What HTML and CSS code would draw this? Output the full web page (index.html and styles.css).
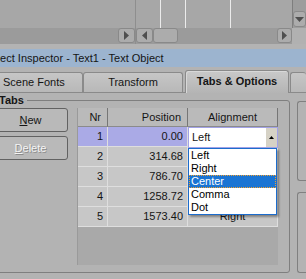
FILE: index.html
```html
<!DOCTYPE html>
<html lang="en">
<head>
    <meta charset="UTF-8" />
    <meta name="viewport" content="width=device-width, initial-scale=1.0" />
    <title>Object Inspector</title>
    <link rel="stylesheet" href="styles.css">
</head>
<body>
    <div class="viewport">
        <div class="lanes">
            <div class="lane lane-a"></div>
            <div class="lane lane-b"></div>
            <div class="lane lane-b"></div>
            <div class="lane lane-c"></div>
            <div class="lane lane-d"></div>
        </div>
        <div class="vscroll">
            <div class="sb-btn sb-down">
                <svg width="9" height="5" viewBox="0 0 9 5"><polygon points="0,0 9,0 4.5,5" fill="#4f4f4f"/></svg>
            </div>
        </div>
        <div class="hscroll">
            <div class="track track-left">
                <div class="sb-btn">
                    <svg width="5" height="9" viewBox="0 0 5 9"><polygon points="0,0 5,4.5 0,9" fill="#4f4f4f"/></svg>
                </div>
            </div>
            <div class="track track-right">
                <div class="sb-btn">
                    <svg width="5" height="9" viewBox="0 0 5 9"><polygon points="5,0 0,4.5 5,9" fill="#4f4f4f"/></svg>
                </div>
                <div class="thumb"></div>
                <div class="fill"></div>
                <div class="sb-btn sb-end">
                    <svg width="5" height="9" viewBox="0 0 5 9"><polygon points="0,0 5,4.5 0,9" fill="#4f4f4f"/></svg>
                </div>
            </div>
        </div>
        <div class="corner"></div>
    </div>

    <div class="window">
        <div class="title">Object Inspector - Text1 - Text Object</div>

        <div class="tabs">
            <div class="tab tab-fonts">Scene Fonts</div>
            <div class="tab tab-transform">Transform</div>
            <div class="tab tab-active">Tabs &amp; Options</div>
            <div class="tab tab-more"></div>
        </div>

        <div class="page">
            <fieldset class="group">
                <legend>Tabs</legend>
                <div class="group-body">
                    <div class="buttons">
                        <div class="btn"><u>N</u>ew</div>
                        <div class="btn btn-disabled"><u>D</u>elete</div>
                    </div>

                    <div class="grid">
                        <div class="hd">Nr</div>
                        <div class="hd">Position</div>
                        <div class="hd hd-center">Alignment</div>

                        <div class="cell row-sel">1</div>
                        <div class="cell row-sel">0.00</div>
                        <div class="cell cell-combo">
                            <div class="combo">
                                <span class="combo-text">Left</span>
                                <span class="combo-btn">
                                    <svg width="5" height="3" viewBox="0 0 5 3"><polygon points="0,3 5,3 2.5,0" fill="#000"/></svg>
                                </span>
                            </div>
                            <ul class="dropdown">
                                <li>Left</li>
                                <li>Right</li>
                                <li class="active">Center</li>
                                <li>Comma</li>
                                <li>Dot</li>
                            </ul>
                        </div>

                        <div class="cell">2</div>
                        <div class="cell">314.68</div>
                        <div class="cell cell-center"></div>

                        <div class="cell">3</div>
                        <div class="cell">786.70</div>
                        <div class="cell cell-center"></div>

                        <div class="cell">4</div>
                        <div class="cell">1258.72</div>
                        <div class="cell cell-center"></div>

                        <div class="cell">5</div>
                        <div class="cell">1573.40</div>
                        <div class="cell cell-center">Right</div>
                    </div>
                </div>
            </fieldset>

            <div class="side">
                <div class="side-box side-box-top"></div>
                <div class="side-box side-box-bottom"></div>
            </div>
        </div>
    </div>
</body>
</html>
```

FILE: styles.css
```css
* {
    box-sizing: border-box;
}

body {
    margin: 0;
    width: 306px;
    height: 279px;
    overflow: hidden;
    background-color: #b3b3b3;
    font-family: "Liberation Sans", Arial, sans-serif;
    font-size: 11px;
    color: #151515;
}

/* timeline view above the inspector */
.viewport {
    display: grid;
    grid-template-columns: 292px 14px;
    grid-template-rows: 28px 16px;
    padding-bottom: 5px;
}

.lanes {
    display: flex;
    background-color: #a7a7a7;
}

.lane {
    border-right: 1px solid #ebebeb;
}

.lane-a {
    width: 136px;
    border-right-color: #8e8e8e;
}

.lane-b {
    width: 25px;
}

.lane-c {
    width: 45px;
}

.lane-d {
    flex: 1;
    border-right: none;
}

.vscroll {
    background-color: #9d9d9d;
    border-left: 1px solid #7e7e7e;
    padding-top: 11px;
}

.hscroll {
    display: flex;
}

.track {
    display: flex;
    background-color: #9b9b9b;
}

.track-left {
    width: 136px;
    justify-content: flex-end;
    border-right: 1px solid #8e8e8e;
}

.track-right {
    flex: 1;
}

.sb-btn {
    width: 17px;
    height: 15px;
    display: flex;
    align-items: center;
    justify-content: center;
    background-color: #acacac;
    border: 1px solid #898989;
    border-radius: 3px;
}

.sb-down {
    width: 13px;
    height: 16px;
}

.sb-end {
    width: 15px;
}

.thumb {
    width: 25px;
    height: 15px;
    background-color: #acacac;
    border: 1px solid #898989;
    border-radius: 3px;
}

.fill {
    flex: 1;
}

.corner {
    background-color: #b1b1b1;
}

/* inspector window, its left part is scrolled out of view */
.window {
    margin-left: -30px;
    width: 336px;
}

.title {
    height: 18px;
    line-height: 18px;
    padding-left: 13px;
    background-color: #9cb4cf;
    white-space: nowrap;
}

.tabs {
    display: flex;
    align-items: flex-end;
    height: 26px;
    border-bottom: 1px solid #8a8a8a;
}

.tab {
    height: 20px;
    line-height: 19px;
    text-align: center;
    white-space: nowrap;
    border: 1px solid #8a8a8a;
    border-bottom: none;
    border-radius: 3px 3px 0 0;
    background: linear-gradient(#c6c6c6, #b8b8b8);
}

.tab-fonts {
    width: 113px;
    text-align: left;
    padding-left: 32px;
}

.tab-transform {
    width: 100px;
    margin-right: 2px;
}

.tab-active {
    width: 104px;
    height: 23px;
    line-height: 21px;
    margin-right: 1px;
    margin-bottom: -1px;
    font-weight: bold;
    background: linear-gradient(#c9c9c9, #b4b4b4);
    box-shadow: inset 1px 1px 0 #d8d8d8;
}

.tab-more {
    flex: 1;
    border-right: none;
}

.page {
    display: flex;
    padding-top: 1px;
}

.group {
    width: 310px;
    min-width: 0;
    margin: 0 0 0 10px;
    padding: 1px 11px 7px 12px;
    border: 1px solid #7f7f7f;
    border-radius: 3px;
}

.group legend {
    font-weight: bold;
    line-height: 13px;
    padding: 0 3px;
    margin-left: 3px;
}

.group-body {
    display: flex;
}

.buttons {
    width: 75px;
    display: flex;
    flex-direction: column;
    gap: 4px;
}

.btn {
    height: 24px;
    line-height: 22px;
    text-align: center;
    background-color: #b9b9b9;
    border: 1px solid #626262;
    border-radius: 3px;
}

.btn-disabled {
    color: #f4f4f4;
    text-shadow: 1px 1px 0 #8c8c8c;
}

/* tab stops table */
.grid {
    width: 201px;
    height: 157px;
    margin-left: 9px;
    display: grid;
    grid-template-columns: 30px 80px 90px;
    grid-template-rows: 19px repeat(5, 20px);
    align-content: start;
    background-color: #a9a9a9;
    border-left: 1px solid #9a9a9a;
}

.hd {
    line-height: 18px;
    text-align: right;
    padding-right: 6px;
    background-color: #bababa;
    border-right: 1px solid #767676;
    border-bottom: 1px solid #8b8b8b;
}

.hd-center {
    text-align: center;
    padding-right: 0;
}

.cell {
    line-height: 19px;
    text-align: right;
    padding-right: 4px;
    background-color: #c7c7c7;
    border-right: 1px solid #dedede;
    border-bottom: 1px solid #dedede;
}

.cell-center {
    text-align: center;
    padding-right: 0;
}

.row-sel {
    background-color: #aaaae6;
}

.cell-combo {
    position: relative;
    z-index: 2;
    padding: 0;
    border: none;
    text-align: left;
}

.combo {
    display: flex;
    height: 21px;
    background-color: #fff;
    border: 1px solid #a2a2e6;
}

.combo-text {
    flex: 1;
    padding-left: 3px;
    line-height: 19px;
}

.combo-btn {
    width: 11px;
    display: flex;
    align-items: center;
    justify-content: center;
    background-color: #d6d2c6;
}

.dropdown {
    position: absolute;
    left: 0;
    top: 21px;
    width: 89px;
    margin: 0;
    padding: 0;
    list-style: none;
    background-color: #fff;
    border: 1px solid #1c6ccd;
    box-shadow: 2px 2px 2px rgba(0, 0, 0, 0.35);
}

.dropdown li {
    height: 13px;
    line-height: 13px;
    padding-left: 2px;
    color: #000;
}

.dropdown .active {
    color: #fff;
    background-color: #1a74d3;
    outline: 1px dotted #f0a030;
    outline-offset: -1px;
}

.side {
    flex: 1;
    margin-left: 7px;
    padding-top: 7px;
    display: flex;
    flex-direction: column;
    gap: 11px;
}

.side-box {
    border: 1px solid #808080;
    border-right: none;
    border-radius: 3px 0 0 3px;
}

.side-box-top {
    height: 80px;
}

.side-box-bottom {
    height: 81px;
}
```
